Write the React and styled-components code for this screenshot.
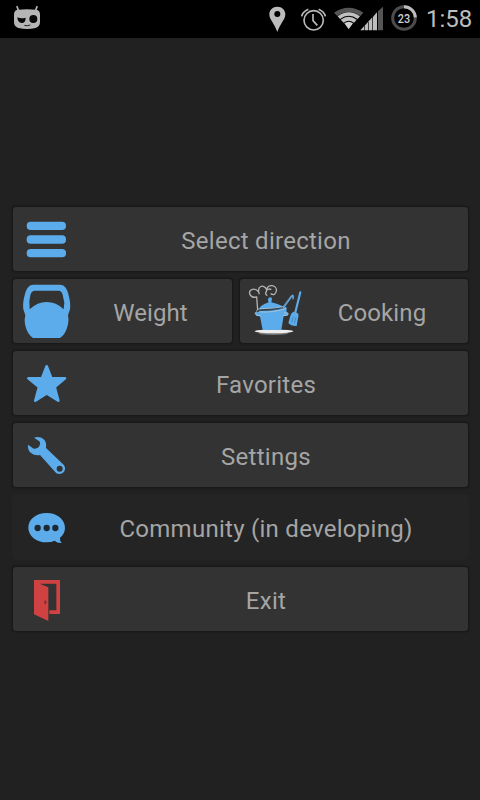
import React from "react";
import styled, { createGlobalStyle } from "styled-components";

const BLUE = "#5caceb";
const RED = "#d04242";

const GlobalStyle = createGlobalStyle`
  html,
  body {
    margin: 0;
    background: #212121;
  }
`;

const Screen = styled.div`
  width: 480px;
  height: 800px;
  display: flex;
  flex-direction: column;
  overflow: hidden;
  background: #212121;
  font-family: Roboto, "Noto Sans", sans-serif;
`;

const StatusBar = styled.header`
  flex: none;
  height: 38px;
  display: flex;
  align-items: center;
  box-sizing: border-box;
  padding: 0 8px 0 13px;
  background: #000;
`;

const StatusIcons = styled.div`
  display: flex;
  margin-left: auto;
`;

const StatusIcon = styled.svg`
  display: block;
  height: 38px;
  width: ${p => p.$width}px;
  margin-left: ${p => p.$gap || 0}px;
`;

const Clock = styled.div`
  width: 46px;
  margin-left: 8px;
  color: #bdbdbd;
  font-size: 24px;
  line-height: 40px;
  white-space: nowrap;
`;

const Menu = styled.main`
  display: flex;
  flex-direction: column;
  gap: 6px;
  padding: 168px 11px 0 12px;
`;

const Row = styled.div`
  display: flex;
  gap: 6px;
`;

const Button = styled.button`
  flex: ${p => (p.$width ? `0 0 ${p.$width}px` : "1 1 0")};
  height: 66px;
  display: flex;
  align-items: center;
  box-sizing: border-box;
  padding: 0 9px 0 0;
  border: 1px solid #191919;
  border-radius: 4px;
  background: #333;
  box-shadow: 0 0 2px rgba(0, 0, 0, 0.45);
  color: #a5a5a5;
  font-family: inherit;
  font-size: 24px;
  :focus {
    outline: none;
  }
  &:disabled {
    border-color: #232323;
    background: #242424;
    box-shadow: none;
  }
`;

const ButtonIcon = styled.svg`
  flex: none;
  display: block;
  width: 60px;
  height: 64px;
  overflow: visible;
`;

const Label = styled.span`
  flex: 1;
  margin-left: ${p => (p.$half ? 5 : 0)}px;
  line-height: 28px;
  padding-top: 3px;
  text-align: center;
  white-space: nowrap;
  letter-spacing: ${p => (p.$half ? 0.1 : 0.27)}px;
`;

const BatteryLevel = styled.text`
  font-family: Roboto, sans-serif;
  font-size: 39px;
  font-weight: 500;
  fill: #d0d0d0;
`;

const RobotHead = () => (
  <StatusIcon $width={29} viewBox="39 0 87 114">
    <path d="M51 20l5 13M111 20l-5 13" stroke="#b5b5b5" strokeWidth="5" strokeLinecap="round" />
    <path
      d="M53 29Q81 26 109 29Q120 31 120 44V66Q120 80 107 84Q81 90 55 84Q42 80 42 66V44Q42 31 53 29Z"
      fill="#b5b5b5"
    />
    <path d="M52 52Q64 57 77 53Q77 69 65 69Q53 68 52 52Z" fill="#080808" />
    <circle cx="100" cy="57" r="12" fill="#080808" />
    <path d="M73 76Q81 79 91 75" stroke="#222" strokeWidth="3" fill="none" />
  </StatusIcon>
);

const Pin = () => (
  <StatusIcon $width={18} viewBox="42 0 54 114">
    <path
      fillRule="evenodd"
      d="M67 20C53 20 43 30 43 43C43 59 57 68 67 96C77 68 91 59 91 43C91 30 81 20 67 20ZM67 33a9 9 0 1 1 0 18a9 9 0 1 1 0-18Z"
      fill="#bcbcbc"
    />
  </StatusIcon>
);

const Alarm = () => (
  <StatusIcon $width={27} $gap={13} viewBox="135 0 81 114">
    <g fill="none" stroke="#b8b8b8">
      <circle cx="176" cy="61" r="29" strokeWidth="5" />
      <path d="M174 42V62L187 76" strokeWidth="5" />
      <path d="M140 49Q143 35 160 28M211 49Q208 35 191 28" strokeWidth="5" />
    </g>
  </StatusIcon>
);

const Signal = () => (
  <StatusIcon $width={50} $gap={7} viewBox="237 0 150 114">
    <path d="M237 38Q281 8 325 38L316 48Q281 24 247 48Z" fill="#555" />
    <path d="M248 49Q281 25 315 49L308 57Q281 38 255 57Z" fill="#c0c0c0" />
    <path d="M257 59Q281 42 305 59L297 68Q281 57 266 68Z" fill="#c0c0c0" />
    <path d="M268 70Q281 61 294 70L281 88Z" fill="#d0d0d0" />
    <g fill="#bdbdbd">
      <path d="M316 91L327 79V91Z" />
      <path d="M329 77L339 66V91H329Z" />
      <path d="M341 64L352 52V91H341Z" />
      <path d="M354 50L366 37V91H354Z" />
    </g>
    <path d="M369 34L384 20V91H369Z" fill="#555" />
  </StatusIcon>
);

const Battery = () => (
  <StatusIcon $width={28} $gap={6} viewBox="60 0 84 114">
    <g fill="none" strokeWidth="9">
      <circle cx="102" cy="54" r="34" stroke="#4c4c4c" />
      <path d="M102 20A34 34 0 0 1 136 52" stroke="#bdbdbd" />
    </g>
    <BatteryLevel x="102" y="69" textAnchor="middle" textLength="37" lengthAdjust="spacingAndGlyphs">
      23
    </BatteryLevel>
  </StatusIcon>
);

// every menu icon is drawn on a grid of 3 units per pixel
const MenuIcon = ({ x = 39, y = 21, children }) => (
  <ButtonIcon viewBox={`${x} ${y} 180 192`}>{children}</ButtonIcon>
);

const BarsIcon = () => (
  <MenuIcon>
    <g fill={BLUE}>
      <rect x="80" y="65" width="118" height="25" rx="12" />
      <rect x="80" y="106" width="118" height="25" rx="12" />
      <rect x="80" y="147" width="118" height="25" rx="12" />
    </g>
  </MenuIcon>
);

const KettlebellIcon = () => (
  <MenuIcon>
    <path
      fillRule="evenodd"
      d="M100 38H180C192 38 200 47 204 62Q213 94 210 112L204 130Q208 150 200 171Q193 190 180 198H99Q86 190 79 171Q71 150 76 130L70 112Q67 92 76 62C81 47 88 38 100 38ZM103 56Q94 57 91 70L88 87L89 112Q112 90 140 90Q169 90 191 112L193 92L188 68Q185 57 178 56Z"
      fill={BLUE}
    />
  </MenuIcon>
);

const CookingIcon = () => (
  <MenuIcon x={45}>
    <ellipse cx="145" cy="184" rx="44" ry="5" fill="#777" />
    <ellipse cx="147" cy="178" rx="58" ry="5.5" fill="#eee" />
    <path
      d="M98 114L95 75C75 80 67 58 80 53Q91 48 100 59M103 67C94 42 116 34 125 53C128 33 157 40 154 57Q151 73 137 65M139 53Q128 46 122 62Q121 69 127 71M126 53L123 61"
      fill="none"
      stroke="#b3b3b3"
      strokeWidth="4"
    />
    <path d="M131 77Q139 73 141 80L139 91Q162 96 175 105L103 112Q102 101 131 91Q127 82 131 77Z" fill={BLUE} />
    <path
      d="M103 117Q148 118 184 104L185 121Q193 123 187 131L176 132L169 174H113L105 133L94 131Q87 124 94 120L104 121Z"
      fill={BLUE}
    />
    <path
      d="M93 118Q98 109 111 110Q148 110 180 103M100 120Q151 122 184 109M177 123Q194 120 188 129L174 131M94 119Q86 125 96 130L108 132"
      fill="none"
      stroke="#a9c5d9"
      strokeWidth="2.5"
    />
    <path d="M101 114Q149 117 181 106" stroke="#416f93" strokeWidth="2" fill="none" />
    <path d="M176 106L200 73Q206 65 204 80" fill="none" stroke={BLUE} strokeWidth="4.5" strokeLinecap="round" />
    <path d="M174 103L199 70" stroke="#a9c5d9" strokeWidth="1.2" />
    <path d="M226 61L211 121" stroke={BLUE} strokeWidth="6.5" strokeLinecap="round" />
    <path d="M205 119L217 123Q223 126 219 139L215 162Q198 163 190 153L196 132Q198 123 205 119Z" fill={BLUE} />
    <path d="M200 151L205 134M208 154L213 136" stroke="#37688f" strokeWidth="1.5" />
  </MenuIcon>
);

const StarIcon = () => (
  <MenuIcon>
    <path
      d="M140 67L154 103H195L164 129L175 170L140 148L106 170L117 129L85 103H126Z"
      fill={BLUE}
      stroke={BLUE}
      strokeWidth="8"
      strokeLinejoin="round"
    />
  </MenuIcon>
);

const WrenchIcon = () => (
  <MenuIcon>
    <path
      fillRule="evenodd"
      d="M102 65Q119 59 131 70Q141 80 138 96L191 146Q199 156 192 167Q183 178 169 172L120 117Q104 120 92 110Q82 101 84 86L101 98Q111 99 117 92Q123 83 118 76ZM179 149a9 9 0 1 0 0 18a9 9 0 1 0 0-18Z"
      fill={BLUE}
    />
  </MenuIcon>
);

const ChatIcon = () => (
  <MenuIcon y={27}>
    <path
      d="M140 81C171 81 195 100 195 126C195 138 189 148 180 155Q179 164 185 171Q171 172 164 164Q154 169 140 169C109 169 85 150 85 125C85 100 109 81 140 81Z"
      fill={BLUE}
    />
    <g fill="#1d2a34">
      <circle cx="113" cy="126" r="9.5" />
      <circle cx="140" cy="126" r="9.5" />
      <circle cx="166" cy="126" r="9.5" />
    </g>
  </MenuIcon>
);

const DoorIcon = () => (
  <MenuIcon>
    <path d="M102 60H180V162H148V151H169V71H119L145 82V183L102 163Z" fill={RED} />
    <ellipse cx="136" cy="127" rx="3" ry="6" fill="#6b3434" />
  </MenuIcon>
);

const MenuButton = ({ icon, label, width, half, disabled }) => (
  <Button $width={width} disabled={disabled}>
    {icon}
    <Label $half={half}>{label}</Label>
  </Button>
);

export default function App() {
  return (
    <>
      <GlobalStyle />
      <Screen>
        <StatusBar>
          <RobotHead />
          <StatusIcons>
            <Pin />
            <Alarm />
            <Signal />
            <Battery />
          </StatusIcons>
          <Clock>1:58</Clock>
        </StatusBar>
        <Menu>
          <Row>
            <MenuButton icon={<BarsIcon />} label="Select direction" />
          </Row>
          <Row>
            <MenuButton icon={<KettlebellIcon />} label="Weight" width={221} half />
            <MenuButton icon={<CookingIcon />} label="Cooking" half />
          </Row>
          <Row>
            <MenuButton icon={<StarIcon />} label="Favorites" />
          </Row>
          <Row>
            <MenuButton icon={<WrenchIcon />} label="Settings" />
          </Row>
          <Row>
            <MenuButton icon={<ChatIcon />} label="Community (in developing)" disabled />
          </Row>
          <Row>
            <MenuButton icon={<DoorIcon />} label="Exit" />
          </Row>
        </Menu>
      </Screen>
    </>
  );
}
